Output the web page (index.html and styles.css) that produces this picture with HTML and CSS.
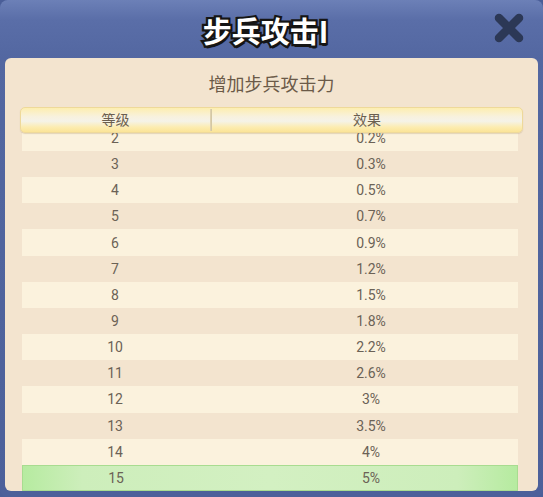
FILE: index.html
```html
<!DOCTYPE html>
<html lang="zh">
<head>
<meta charset="utf-8">
<title>步兵攻击I</title>
<link rel="stylesheet" href="styles.css">
</head>
<body>
<div class="frame">
  <div class="titlebar">
    <div class="title">步兵攻击I</div>
    <div class="close">
      <svg width="30" height="30" viewBox="0 0 30 30"><path d="M5 5 L25 25 M25 5 L5 25" stroke="#2c3856" stroke-width="8.5" stroke-linecap="round" fill="none"/></svg>
    </div>
  </div>
  <div class="panel">
    <div class="subtitle">增加步兵攻击力</div>
    <div class="thead">
      <div class="th c1">等级</div>
      <div class="sep"></div>
      <div class="th c2">效果</div>
    </div>
    <div class="list">
      <div class="row light first"><span class="c1">2</span><span class="c2">0.2%</span></div>
      <div class="row"><span class="c1">3</span><span class="c2">0.3%</span></div>
      <div class="row light"><span class="c1">4</span><span class="c2">0.5%</span></div>
      <div class="row"><span class="c1">5</span><span class="c2">0.7%</span></div>
      <div class="row light"><span class="c1">6</span><span class="c2">0.9%</span></div>
      <div class="row"><span class="c1">7</span><span class="c2">1.2%</span></div>
      <div class="row light"><span class="c1">8</span><span class="c2">1.5%</span></div>
      <div class="row"><span class="c1">9</span><span class="c2">1.8%</span></div>
      <div class="row light"><span class="c1">10</span><span class="c2">2.2%</span></div>
      <div class="row"><span class="c1">11</span><span class="c2">2.6%</span></div>
      <div class="row light"><span class="c1">12</span><span class="c2">3%</span></div>
      <div class="row"><span class="c1">13</span><span class="c2">3.5%</span></div>
      <div class="row light"><span class="c1">14</span><span class="c2">4%</span></div>
      <div class="row current"><span class="c1">15</span><span class="c2">5%</span></div>
    </div>
  </div>
</div>
</body>
</html>
```

FILE: styles.css
```css
html, body {
  margin: 0;
  padding: 0;
  background: #4a5e98;
}
body {
  width: 543px;
  height: 497px;
  overflow: hidden;
  font-family: "Noto Sans CJK SC", "Noto Sans", sans-serif;
}
.frame {
  width: 543px;
  height: 497px;
  box-sizing: border-box;
  padding: 0 5px 6px 5px;
  display: flex;
  flex-direction: column;
  background: linear-gradient(#6c80b7 0px, #5a6ea8 20px, #5367a1 58px, #4c609a 100%);
  border-radius: 8px;
}
.titlebar {
  height: 58px;
  flex: none;
  display: grid;
  grid-template-columns: 1fr auto 1fr;
  align-items: center;
}
.title {
  grid-column: 2;
  color: #fff;
  font-size: 29px;
  font-weight: 700;
  -webkit-text-stroke: 4.5px #151515;
  paint-order: stroke fill;
  text-shadow: 1px 3px 0 #151515;
  line-height: 1;
  margin-top: 2px;
  margin-left: -12px;
}
.close {
  grid-column: 3;
  justify-self: end;
  margin-right: 14px;
  margin-top: -2px;
  width: 30px;
  height: 30px;
}
.close svg { display: block; }
.panel {
  flex: 1;
  background: #f3e4cf;
  border-radius: 6px;
  display: flex;
  flex-direction: column;
  overflow: hidden;
  min-height: 0;
}
.subtitle {
  height: 49px;
  flex: none;
  display: flex;
  align-items: center;
  justify-content: center;
  color: #6b5a48;
  font-size: 18px;
  padding-top: 1px;
  box-sizing: border-box;
}
.thead {
  flex: none;
  height: 26px;
  margin: 0 15px;
  box-sizing: border-box;
  display: grid;
  grid-template-columns: 189px 2px 1fr;
  align-items: center;
  border: 1px solid #eed99a;
  border-radius: 5px;
  background: linear-gradient(#fdeeb0 0%, #f8f1dc 35%, #f5f3e8 55%, #fcecb0 80%, #fbe497 100%);
  box-shadow: 0 1px 1px rgba(150, 120, 70, 0.25);
  position: relative;
  z-index: 1;
  color: #6b5f50;
  font-size: 14px;
}
.th {
  text-align: center;
  line-height: 22px;
  margin-top: -2px;
}
.sep {
  height: 22px;
  width: 2px;
  background: linear-gradient(90deg, #e3d6b4, #cfc3a0);
}
.list {
  flex: 1;
  overflow: hidden;
  min-height: 0;
  padding: 0 20px 0 17px;
}
.row {
  height: 26.17px;
  display: grid;
  grid-template-columns: 188px 1fr;
  align-items: center;
  color: #6b6256;
  font-size: 14px;
  font-family: "Roboto", "Noto Sans CJK SC", sans-serif;
}
.row.first { margin-top: -8.2px; }
.row.light { background: #fbf2dd; }
.row .c1 { text-align: center; padding-right: 2px; }
.row .c2 { text-align: center; padding-left: 14px; }
.row.current {
  box-sizing: border-box;
  border: 1px solid #a8dc90;
  background: linear-gradient(90deg, #b6eba0 0%, #cdeebb 12%, #d3f0c2 50%, #cdeebb 88%, #b6eba0 100%);
}
```
